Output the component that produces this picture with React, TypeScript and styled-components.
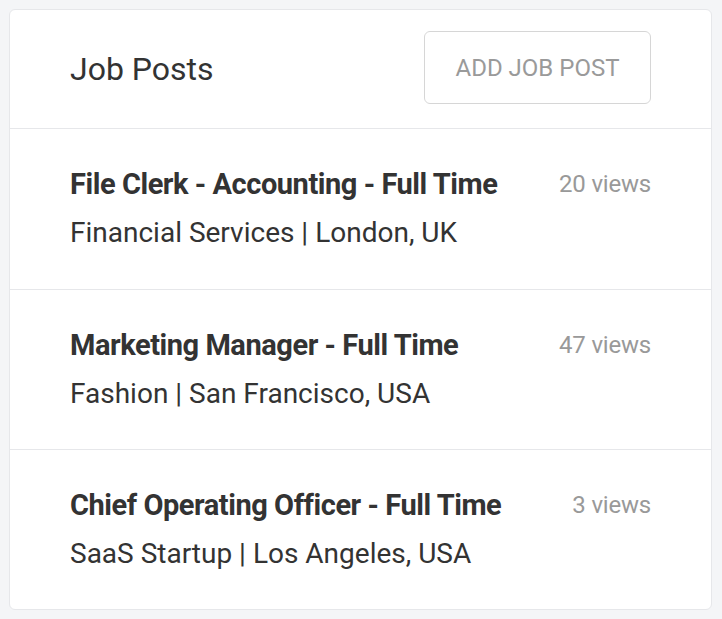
import React from "react";
import styled, { createGlobalStyle } from "styled-components";

const Global = createGlobalStyle`
  html, body { margin: 0; padding: 0; background: #f4f5f7; }
  body { font-family: Roboto, "Liberation Sans", sans-serif; }
`;

const Page = styled.div`
  padding: 9px;
`;

const Card = styled.div`
  width: 703px;
  background: #fff;
  border: 1px solid #e6e7ea;
  border-radius: 6px;
  box-sizing: border-box;
  overflow: hidden;
`;

const Header = styled.div`
  height: 119px;
  display: flex;
  align-items: center;
  justify-content: space-between;
  padding: 0 60px;
  border-bottom: 1px solid #e6e7ea;
  box-sizing: border-box;
`;

const Title = styled.h2`
  margin: 0;
  font-size: 32px;
  font-weight: 400;
  color: #333;
  letter-spacing: 0;
`;

const Button = styled.button`
  width: 227px;
  height: 73px;
  margin-top: -3px;
  border: 1.5px solid #d6d6d6;
  border-radius: 6px;
  background: #fff;
  color: #9a9a9a;
  font-family: Roboto, "Liberation Sans", sans-serif;
  font-size: 24px;
  letter-spacing: 0;
  text-transform: uppercase;
`;

const Row = styled.div`
  height: 160px;
  box-sizing: border-box;
  padding: 31px 60px 0;
  display: flex;
  justify-content: space-between;
  align-items: flex-start;
  & + & { border-top: 1px solid #e6e7ea; }
`;

const Info = styled.div`
  display: flex;
  flex-direction: column;
`;

const JobTitle = styled.div`
  font-size: 29px;
  font-weight: 700;
  color: #333;
  letter-spacing: -0.45px;
  line-height: 48px;
`;

const Meta = styled.div`
  font-size: 28px;
  font-weight: 400;
  color: #333;
  letter-spacing: 0;
  line-height: 49px;
`;

const Views = styled.div`
  font-size: 24px;
  color: #999;
  line-height: 48px;
  letter-spacing: -0.2px;
`;

const jobs = [
  { title: "File Clerk - Accounting - Full Time", meta: "Financial Services | London, UK", views: 20 },
  { title: "Marketing Manager - Full Time", meta: "Fashion | San Francisco, USA", views: 47 },
  { title: "Chief Operating Officer - Full Time", meta: "SaaS Startup | Los Angeles, USA", views: 3 },
];

export default function App() {
  return (
    <Page>
      <Global />
      <Card>
        <Header>
          <Title>Job Posts</Title>
          <Button>Add Job Post</Button>
        </Header>
        <div>
          {jobs.map((j) => (
            <Row key={j.title}>
              <Info>
                <JobTitle>{j.title}</JobTitle>
                <Meta>{j.meta}</Meta>
              </Info>
              <Views>{j.views} views</Views>
            </Row>
          ))}
        </div>
      </Card>
    </Page>
  );
}
